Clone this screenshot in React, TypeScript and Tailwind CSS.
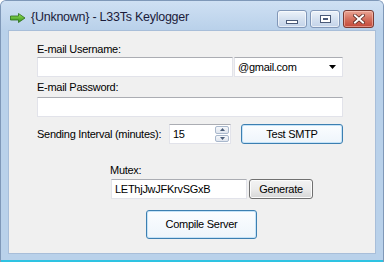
import React from 'react'

const font = { fontFamily: '"Liberation Sans", Arial, sans-serif' }

function CaptionButton({ kind }: { kind: 'min' | 'max' | 'close' }) {
  if (kind === 'close') {
    return (
      <div className="w-[31px] h-[18px] rounded-[3px] border border-[#7a3a32] bg-gradient-to-b from-[#e9a595] via-[#d4705e] to-[#c2483a] flex items-center justify-center shadow-[inset_0_0_0_1px_rgba(255,210,200,0.5)]">
        <svg width="12" height="10" viewBox="0 0 12 10">
          <path d="M2 1.5 L10 8.5 M10 1.5 L2 8.5" stroke="#5a2a24" strokeWidth="3.6" strokeLinecap="square" />
          <path d="M2 1.5 L10 8.5 M10 1.5 L2 8.5" stroke="#ffffff" strokeWidth="2" strokeLinecap="square" />
        </svg>
      </div>
    )
  }
  return (
    <div className="w-[30px] h-[18px] rounded-[3px] border border-[#8197b8] bg-gradient-to-b from-[#edf3fa] via-[#d5e1f0] to-[#c3d3e9] flex items-center justify-center shadow-[inset_0_0_0_1px_rgba(255,255,255,0.6)]">
      {kind === 'min' ? (
        <div className="w-[12px] h-[4px] mt-[6px] border border-[#4a5a78] bg-white" />
      ) : (
        <div className="w-[11px] h-[8px] border border-[#4a5a78] bg-white flex items-center justify-center">
          <div className="w-[5px] h-[2px] border border-[#4a5a78]" />
        </div>
      )}
    </div>
  )
}

function TextBox({ className = '', children }: { className?: string; children?: React.ReactNode }) {
  return (
    <div
      className={`h-[20px] bg-white border border-[#e2e3ea] border-t-[#abadb3] flex items-center px-[3px] text-[11px] text-black ${className}`}
    >
      {children}
    </div>
  )
}

export default function App() {
  return (
    <div style={font} className="w-[384px] h-[262px] flex flex-col bg-[#b9d1ea] rounded-t-[6px] border border-[#7f98b8] border-b-0 overflow-hidden select-none">
      <div className="h-[29px] flex items-start bg-gradient-to-b from-[#cfe0f3] to-[#b9d1ea]">
        <svg width="16" height="10" viewBox="0 0 16 10" className="ml-[9px] mt-[12px]">
          <defs>
            <linearGradient id="ar" x1="0" y1="0" x2="0" y2="1">
              <stop offset="0" stopColor="#9be45a" />
              <stop offset="1" stopColor="#2f8f1a" />
            </linearGradient>
          </defs>
          <path d="M0.5 3 H8.5 V0.5 L15 5 L8.5 9.5 V7 H0.5 Z" fill="url(#ar)" stroke="#2c6e18" strokeWidth="0.8" />
        </svg>
        <span className="ml-[5px] mt-[9px] text-[12.5px] leading-[15px] tracking-[-0.25px] text-[#1b1b3a]">
          {'{Unknown} - L33Ts Keylogger'}
        </span>
        <div className="ml-auto mr-[9px] mt-[9px] flex gap-[3px]">
          <CaptionButton kind="min" />
          <CaptionButton kind="max" />
          <CaptionButton kind="close" />
        </div>
      </div>

      <div className="flex px-[7px]">
        <div className="w-[368px] h-[224px] bg-[#f0f0f0] border border-[#a8bed9] flex flex-col pl-[28px] text-[11px] tracking-[-0.27px] text-black">
          <div className="mt-[11px] h-[14px] leading-[14px]">E-mail Username:</div>
          <div className="mt-[1px] flex gap-[1px]">
            <TextBox className="w-[196px]" />
            <div className="w-[109px] h-[20px] bg-white border border-[#e2e3ea] border-t-[#abadb3] flex items-center pl-[3px] pr-[6px]">
              <span className="flex-1">@gmail.com</span>
              <svg width="7" height="4" viewBox="0 0 7 4">
                <path d="M0 0 H7 L3.5 4 Z" fill="#000" />
              </svg>
            </div>
          </div>
          <div className="mt-[3px] h-[14px] leading-[14px]">E-mail Password:</div>
          <div className="mt-[3px]">
            <TextBox className="w-[306px]" />
          </div>

          <div className="mt-[7px] h-[20px] flex items-center">
            <span className="w-[132px]">Sending Interval (minutes):</span>
            <div className="w-[62px] h-[20px] bg-white border border-[#e2e3ea] border-t-[#abadb3] flex items-center pl-[3px] pr-[1px]">
              <span className="flex-1">15</span>
              <div className="w-[14px] h-[16px] flex flex-col gap-[1px]">
                <div className="flex-1 border border-[#a9b8cc] rounded-[2px] bg-gradient-to-b from-[#f6f8fb] to-[#dfe5ee] flex items-center justify-center">
                  <svg width="5" height="3" viewBox="0 0 5 3"><path d="M0 3 L2.5 0 L5 3 Z" fill="#4b5e7a" /></svg>
                </div>
                <div className="flex-1 border border-[#a9b8cc] rounded-[2px] bg-gradient-to-b from-[#f6f8fb] to-[#dfe5ee] flex items-center justify-center">
                  <svg width="5" height="3" viewBox="0 0 5 3"><path d="M0 0 L2.5 3 L5 0 Z" fill="#4b5e7a" /></svg>
                </div>
              </div>
            </div>
            <div className="ml-[10px] w-[102px] h-[20px] rounded-[3px] border border-[#3c7fb1] bg-gradient-to-b from-[#fbfdff] to-[#eef5fb] shadow-[inset_0_0_0_1px_#c5e3f8] flex items-center justify-center">
              Test SMTP
            </div>
          </div>

          <div className="mt-[19px] ml-[73px] h-[14px] leading-[14px]">Mutex:</div>
          <div className="mt-[2px] ml-[74px] flex gap-[2px]">
            <TextBox className="w-[136px]">LEThjJwJFKrvSGxB</TextBox>
            <div className="w-[64px] h-[20px] rounded-[3px] border border-[#707070] bg-gradient-to-b from-[#f3f3f3] via-[#ebebeb] to-[#d6d6d6] shadow-[inset_0_0_0_1px_#fcfcfc] flex items-center justify-center">
              Generate
            </div>
          </div>

          <div className="mt-[11px] ml-[109px] w-[111px] h-[29px] rounded-[3px] border border-[#3c7fb1] bg-gradient-to-b from-[#fbfdff] to-[#eef5fb] shadow-[inset_0_0_0_1px_#c5e3f8] flex items-center justify-center">
            Compile Server
          </div>
        </div>
      </div>
      <div className="flex-1 border-b-2 border-[#2ec3e2]" />
    </div>
  )
}
